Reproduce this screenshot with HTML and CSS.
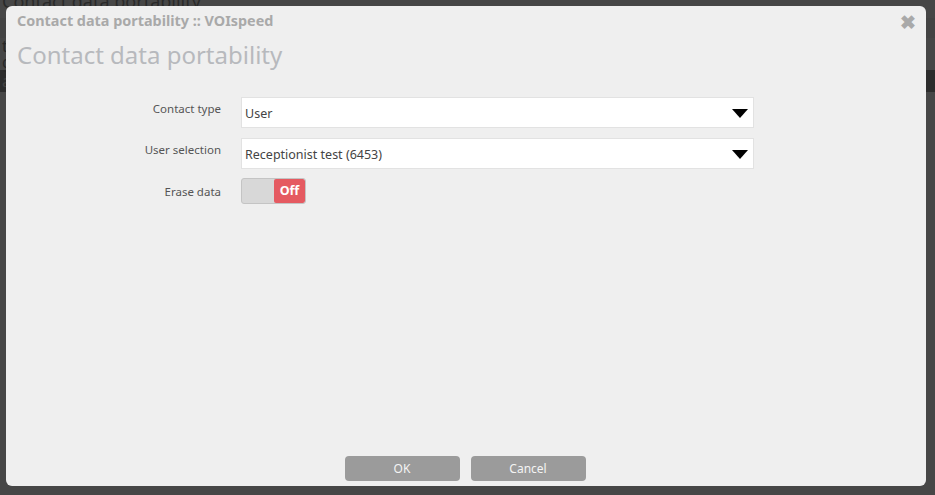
FILE: index.html
```html
<!DOCTYPE html>
<html lang="en"><head>
  <meta name="viewport" content="width=device-width, initial-scale=1.0">
  <title>Contact data portability</title>
  <link rel="stylesheet" href="styles.css">
</head>
<body>
  <!-- page behind the modal -->
  <div class="page">
    <div class="page-title">Contact data portability</div>
    <div class="page-bar"></div>
    <div class="page-line">t</div>
    <div class="page-line">g</div>
    <div class="page-bar2">a</div>
  </div>
  <div class="overlay"></div>

  <!-- Modal -->
  <div class="dialog">
    <div class="dialog-head">
      <span class="dialog-title">Contact data portability :: VOIspeed</span>
      <span class="close">&#10006;</span>
    </div>
    <h1>Contact data portability</h1>

    <div class="form">
      <label>Contact type</label>
      <div class="select">User<span class="caret"></span></div>

      <label>User selection</label>
      <div class="select">Receptionist test (6453)<span class="caret"></span></div>

      <label class="toggle-label">Erase data</label>
      <div class="toggle"><span class="knob"></span><span class="off">Off</span></div>
    </div>

    <div class="buttons">
      <button>OK</button>
      <button>Cancel</button>
    </div>
  </div>
</body>
</html>
```
FILE: styles.css
```css
body {
  margin: 0;
  background: #f0f0f0;
  font-family: "Noto Sans", "Open Sans", sans-serif;
  width: 935px;
  height: 495px;
  overflow: hidden;
  position: relative;
}
.page {
  color: #222;
  font-size: 16px;
}
.page-title {
  font-size: 18px;
  line-height: 14px;
  padding-left: 2px;
  color: #333;
  margin-top: -6px;
}
.page-bar {
  height: 20px;
  margin-top: 10px;
  background: #ddd;
}
.page-line {
  height: 16px;
  line-height: 16px;
  padding-left: 2px;
}
.page-bar2 {
  height: 22px;
  background: #444;
  color: #ccc;
  padding-left: 2px;
}
.overlay {
  position: absolute;
  inset: 0;
  background: rgba(40, 40, 40, 0.85);
}
.dialog {
  position: absolute;
  left: 6px;
  top: 6px;
  width: 920px;
  height: 480px;
  background: #efefef;
  border-radius: 6px;
  box-sizing: border-box;
  display: flex;
  flex-direction: column;
}
.dialog-head {
  display: flex;
  justify-content: space-between;
  align-items: flex-start;
  padding: 6px 10px 0 11px;
  height: 22px;
}
.dialog-title {
  font-size: 14.4px;
  font-weight: bold;
  color: #a9a9a9;
  line-height: 18px;
}
.close {
  color: #a9a9a9;
  font-size: 19px;
  line-height: 18px;
  font-weight: bold;
  margin-top: 1px;
}
h1 {
  margin: 5px 0 0 11px;
  font-size: 24px;
  font-weight: normal;
  color: #b7b9bd;
  line-height: 32px;
}
.form {
  display: grid;
  grid-template-columns: 215px 513px;
  column-gap: 20px;
  row-gap: 10px;
  margin-top: 26px;
  align-items: start;
}
label {
  text-align: right;
  font-size: 11.5px;
  color: #555;
  padding-top: 4px;
}
.toggle-label {
  padding-top: 5px;
}
.select {
  height: 31px;
  background: #fff;
  border: 1px solid #e2e2e2;
  box-sizing: border-box;
  font-size: 12.5px;
  color: #444;
  padding: 7px 0 0 3px;
  position: relative;
}
.caret {
  position: absolute;
  right: 5px;
  top: 11px;
  width: 0;
  height: 0;
  border-left: 8px solid transparent;
  border-right: 8px solid transparent;
  border-top: 9px solid #000;
}
.toggle {
  width: 65px;
  height: 26px;
  border: 1px solid #c4c4c4;
  border-radius: 3px;
  box-sizing: border-box;
  display: flex;
  background: #d8d8d8;
  overflow: hidden;
  margin-top: -1px;
}
.knob {
  width: 32px;
}
.off {
  flex: 1;
  background: #e55a61;
  color: #fff;
  font-weight: bold;
  font-size: 12.5px;
  text-align: center;
  line-height: 24px;
  border-radius: 2px;
}
.buttons {
  margin-top: auto;
  display: flex;
  justify-content: center;
  gap: 11px;
  padding-bottom: 5px;
  padding-right: 2px;
}
button {
  width: 115px;
  height: 25px;
  border: none;
  border-radius: 4px;
  background: #9b9b9b;
  color: #f4f4f4;
  font-family: "Noto Sans", "Open Sans", sans-serif;
  font-size: 12px;
}
```
